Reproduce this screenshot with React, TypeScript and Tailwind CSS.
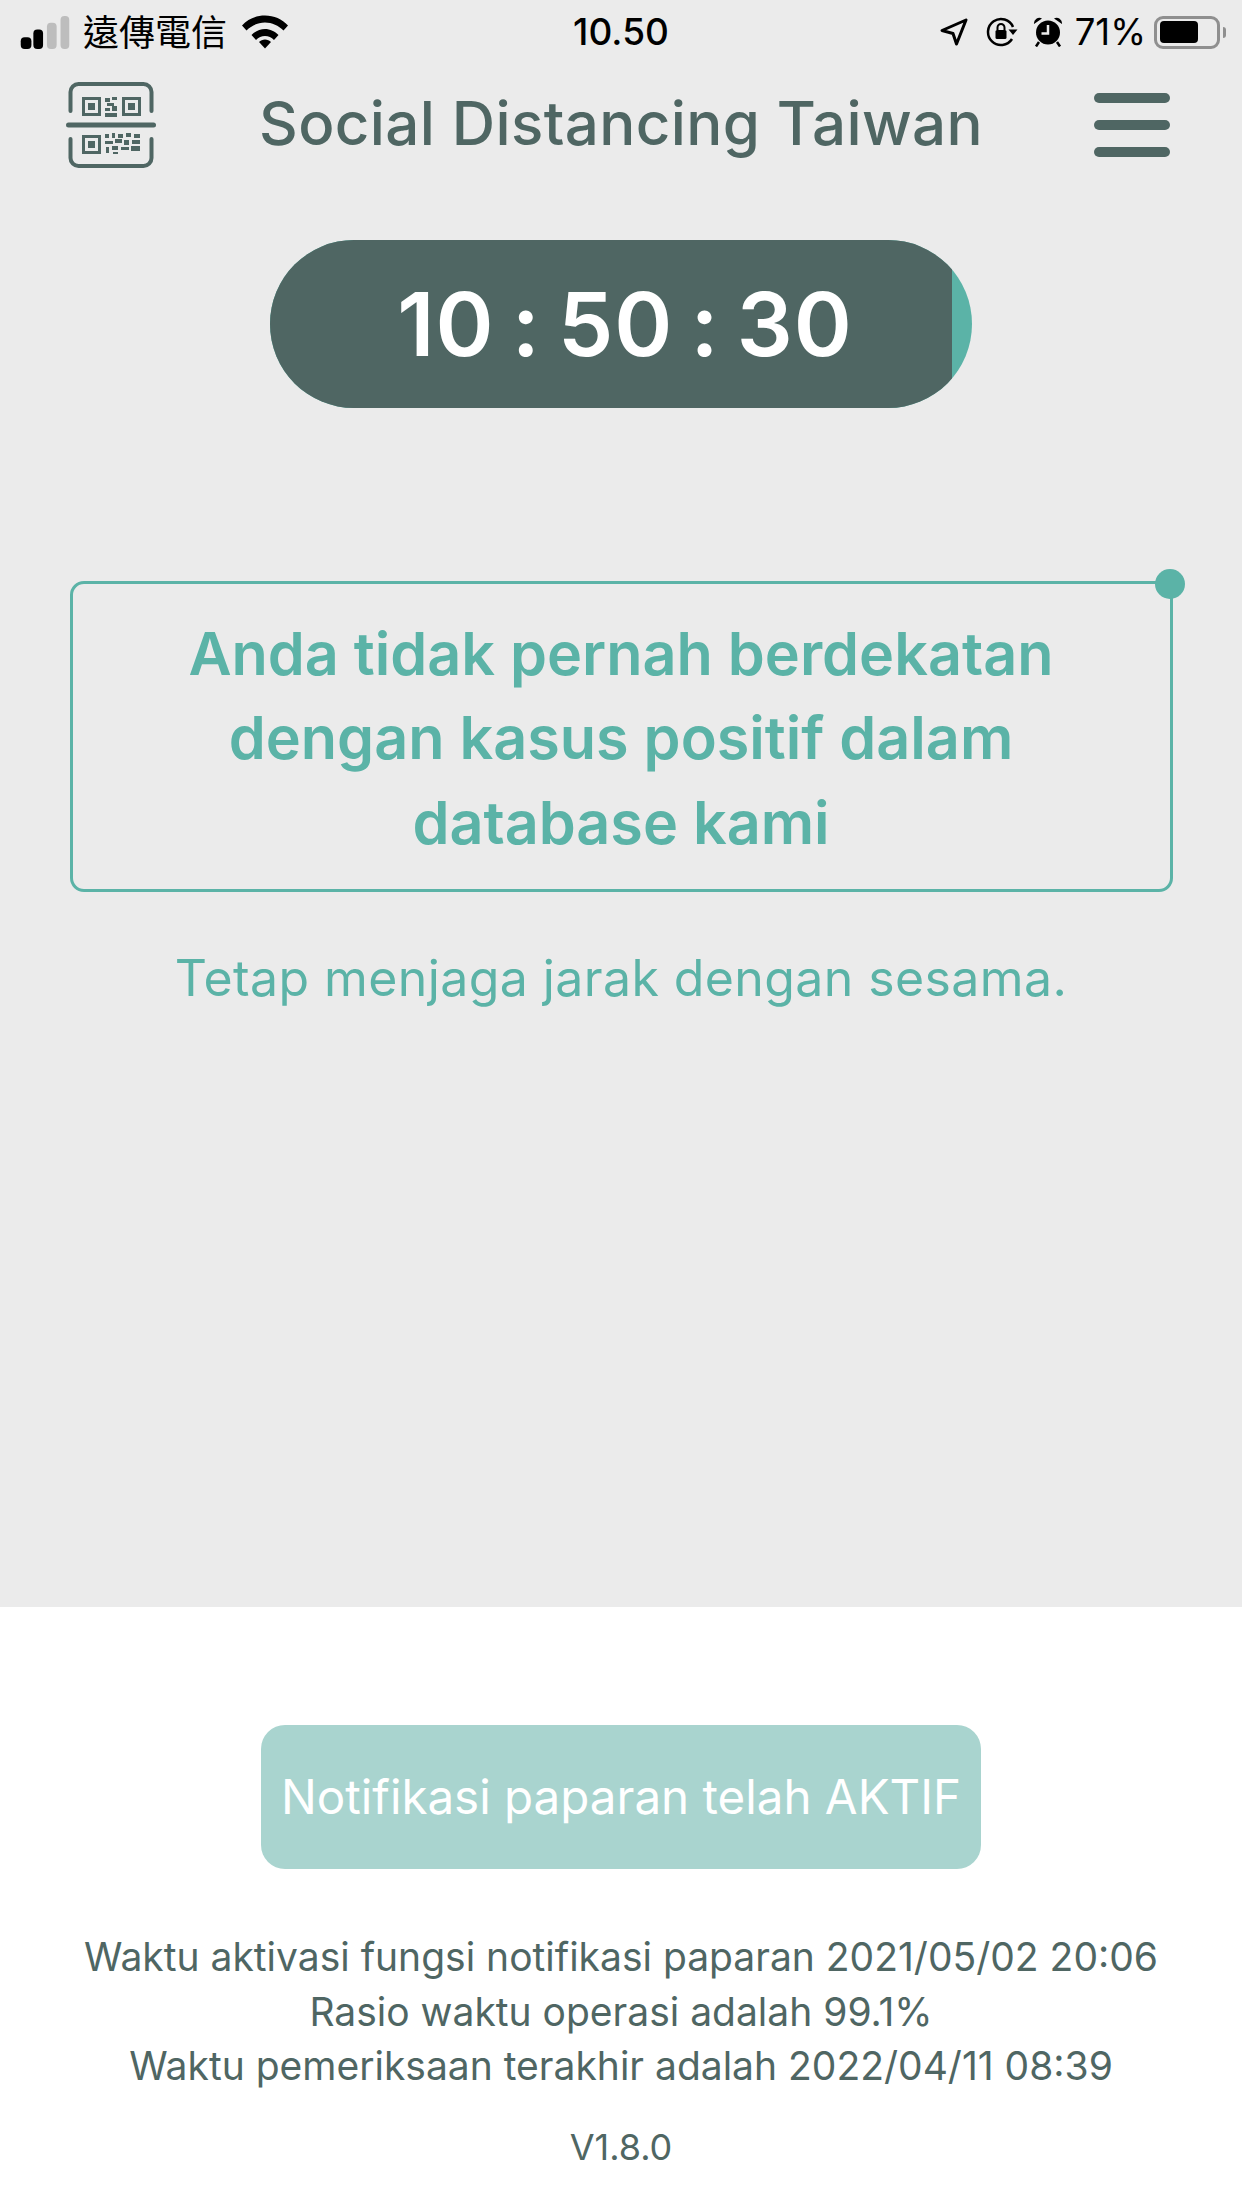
import React from "react";

const Inter = "font-['Inter','Noto_Sans_CJK_TC',sans-serif]";

function Signal() {
  return (
    <svg width="50" height="33" viewBox="0 0 50 34" className="block">
      <rect x="0" y="22" width="11" height="12" rx="4" fill="#000" />
      <rect x="13" y="14" width="10" height="20" rx="4" fill="#000" />
      <rect x="27" y="7" width="10" height="27" rx="4" fill="#bdbdbd" />
      <rect x="41" y="0" width="9" height="34" rx="4" fill="#bdbdbd" />
    </svg>
  );
}

function Wifi() {
  return (
    <svg width="46" height="34" viewBox="0 0 46 34" className="block">
      <path d="M0 10.5C6 4 14 .5 23 .5S40 4 46 10.5L41.5 15.5C36.5 10.5 30 7.5 23 7.5S9.5 10.5 4.5 15.5Z" fill="#000" />
      <path d="M9.5 20C13 16.5 18 14 23 14s10 2.5 13.5 6L32 25c-2.5-2.5-5.5-4-9-4s-6.500 1.500-9 4Z" fill="#000" />
      <path d="M17 27c1.500-1.500 3.700-2.500 6-2.500s4.500 1 6 2.500l-6 6.500Z" fill="#000" />
    </svg>
  );
}

function Location() {
  return (
    <svg width="28" height="28" viewBox="0 0 28 28" className="block">
      <path d="M26 2 2 12.500 13 15.500 16.500 26Z" fill="none" stroke="#000" strokeWidth="3" strokeLinejoin="round" />
    </svg>
  );
}

function RotationLock() {
  return (
    <svg width="32" height="30" viewBox="0 0 32 30" className="block">
      <path d="M27 10A13 13 0 1 0 26 22" fill="none" stroke="#000" strokeWidth="2.500" />
      <path d="M22.500 12.500h9L27 18Z" fill="#000" />
      <rect x="9.500" y="13" width="11" height="9" rx="1.500" fill="#000" />
      <path d="M11.500 13v-2.500a3.500 3.500 0 0 1 7 0V13" fill="none" stroke="#000" strokeWidth="2" />
    </svg>
  );
}

function Alarm() {
  return (
    <svg width="30" height="30" viewBox="0 0 30 30" className="block">
      <circle cx="15" cy="15.500" r="12" fill="#000" />
      <path d="M1 7a5.500 5.500 0 0 1 8-5.500ZM29 7a5.500 5.500 0 0 0-8-5.500Z" fill="#000" />
      <path d="M6 25l-3 4.500M24 25l3 4.500" stroke="#000" strokeWidth="2.500" />
      <path d="M15 8v8.500H8.500" fill="none" stroke="#ebebeb" strokeWidth="2.500" />
    </svg>
  );
}

function Battery() {
  return (
    <div className="flex items-center">
      <div className="flex h-[33px] w-[66px] items-center rounded-[9px] border-[3px] border-[#8f8f8f] p-[3px]">
        <div className="h-[22px] w-[38px] rounded-[4px] bg-black" />
      </div>
      <div className="ml-[3px] h-[11px] w-[3px] rounded-r-[3px] bg-[#8f8f8f]" />
    </div>
  );
}

function QrIcon() {
  const c = "#4f6663";
  const top = "M105 98h5v4h-5zM112 97h5v3h-5zM107 103h7v3h-7zM105 108h5v3h-5zM112 106h5v5h-5zM105 113h12v4h-12z";
  const bottom =
    "M105 134h4v4h-4zM112 133h3v5h-3zM118 134h5v4h-5zM126 133h5v4h-5zM134 134h6v4h-6zM105 141h8v3h-8zM115 139h7v4h-7zM124 140h5v5h-5zM132 140h8v4h-8zM106 147h3v6h-3zM112 146h6v4h-6zM121 147h8v3h-8zM131 146h9v5h-9zM113 152h5v2h-5z";
  return (
    <svg width="90" height="86" viewBox="66 82 90 86" className="-ml-[6px] block">
      <path d="M70.500 111V92a8 8 0 0 1 8-8h65a8 8 0 0 1 8 8v19" fill="none" stroke={c} strokeWidth="4" strokeLinecap="round" />
      <path d="M70.500 139v19a8 8 0 0 0 8 8h65a8 8 0 0 0 8-8v-19" fill="none" stroke={c} strokeWidth="4" strokeLinecap="round" />
      <rect x="66" y="122.500" width="90" height="5" rx="2.500" fill={c} />
      <rect x="83.500" y="98.500" width="16" height="16" fill="none" stroke={c} strokeWidth="3" />
      <rect x="88" y="103" width="7" height="7" fill={c} />
      <rect x="123.500" y="98.500" width="16" height="16" fill="none" stroke={c} strokeWidth="3" />
      <rect x="128" y="103" width="7" height="7" fill={c} />
      <rect x="83.500" y="136.500" width="16" height="16" fill="none" stroke={c} strokeWidth="3" />
      <rect x="88" y="141" width="7" height="7" fill={c} />
      <path d={top} fill={c} />
      <path d={bottom} fill={c} />
    </svg>
  );
}

export default function App() {
  return (
    <div className={`flex h-[2208px] w-[1242px] flex-col overflow-hidden bg-white ${Inter}`}>
      <div className="flex h-[1607px] flex-col items-center bg-[#ebebeb]">
        <div className="grid h-[62px] w-full grid-cols-[1fr_auto_1fr] items-center px-[16px] pt-[2px] text-black">
          <div className="flex items-center pl-[4px]">
            <Signal />
            <span className="mb-[5px] ml-[13px] text-[36px] leading-none font-['Noto_Sans_CJK_TC',sans-serif]">遠傳電信</span>
            <span className="ml-[15px]"><Wifi /></span>
          </div>
          <span className="mb-[2px] text-[37px] font-medium leading-none">10.50</span>
          <div className="flex items-center justify-end">
            <Location />
            <span className="ml-[18px]"><RotationLock /></span>
            <span className="ml-[15px]"><Alarm /></span>
            <span className="ml-[12px] text-[36.5px] leading-none">71%</span>
            <span className="ml-[8px]"><Battery /></span>
          </div>
        </div>
        <div className="mt-[20px] grid h-[86px] w-full grid-cols-[1fr_auto_1fr] items-center px-[72px]">
          <QrIcon />
          <span className="mb-[5px] text-[60px] font-medium leading-none tracking-[0.4px] text-[#4f6663]">Social Distancing Taiwan</span>
          <div className="flex w-[76px] flex-col gap-[17px] justify-self-end">
            <div className="h-[10px] rounded-full bg-[#4f6663]" />
            <div className="h-[10px] rounded-full bg-[#4f6663]" />
            <div className="h-[10px] rounded-full bg-[#4f6663]" />
          </div>
        </div>
        <div className="mt-[72px] flex h-[168px] w-[702px] overflow-hidden rounded-[84px] bg-[#5bb3a7]">
          <div className="flex h-full w-[682px] items-center justify-center bg-[#4f6663] pl-[28px] text-[88px] font-semibold leading-none tracking-[1px] text-white [word-spacing:-6px]">
            10 : 50 : 30
          </div>
        </div>
        <div className="relative mt-[173px] flex h-[311px] w-[1103px] flex-col items-center justify-center rounded-[14px] border-[3px] border-[#5bb3a7] pt-[4px] text-center text-[59.3px] font-semibold leading-[84.5px] text-[#5bb3a7]">
          <span>Anda tidak pernah berdekatan</span>
          <span>dengan kasus positif dalam</span>
          <span>database kami</span>
          <div className="absolute right-[-15px] top-[-15px] h-[30px] w-[30px] rounded-full bg-[#5bb3a7]" />
        </div>
        <div className="mt-[61px] text-[50px] leading-none tracking-[0.4px] text-[#5bb3a7]">Tetap menjaga jarak dengan sesama.</div>
      </div>
      <div className="flex flex-col items-center">
        <div className="mt-[118px] flex h-[144px] w-[720px] items-center justify-center rounded-[24px] bg-[#a9d4cf] text-[47.5px] leading-none text-white">
          Notifikasi paparan telah AKTIF
        </div>
        <div className="mt-[61px] flex flex-col items-center text-[39px] leading-[54.5px] text-[#4f6663]">
          <span>Waktu aktivasi fungsi notifikasi paparan 2021/05/02 20:06</span>
          <span>Rasio waktu operasi adalah 99.1%</span>
          <span>Waktu pemeriksaan terakhir adalah 2022/04/11 08:39</span>
        </div>
        <div className="mt-[35px] text-[36px] leading-none text-[#4f6663]">V1.8.0</div>
      </div>
    </div>
  );
}
